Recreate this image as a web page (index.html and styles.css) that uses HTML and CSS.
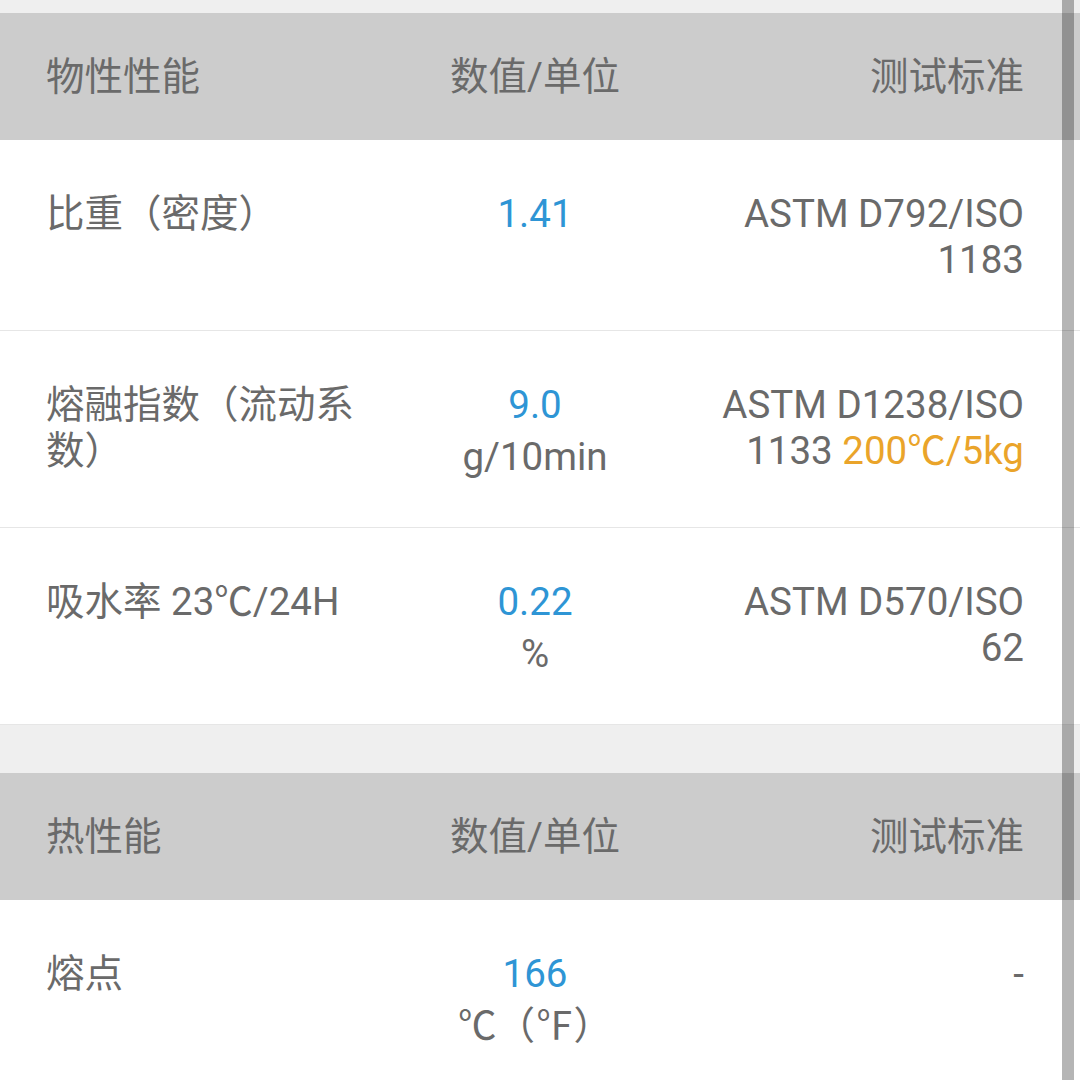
FILE: index.html
```html
<!DOCTYPE html>
<html lang="zh-CN">
<head>
<meta charset="utf-8">
<title>物性</title>
<link rel="stylesheet" href="styles.css">
</head>
<body>
<div class="gap-top"></div>
<section class="table">
  <div class="head">
    <div class="c1">物性性能</div>
    <div class="c2">数值/单位</div>
    <div class="c3">测试标准</div>
  </div>
  <div class="row">
    <div class="c1">比重（密度）</div>
    <div class="c2"><div class="val">1.41</div></div>
    <div class="c3">ASTM D792/ISO 1183</div>
  </div>
  <div class="row">
    <div class="c1">熔融指数（流动系数）</div>
    <div class="c2"><div class="val">9.0</div><div class="unit">g/10min</div></div>
    <div class="c3"><span class="std">ASTM D1238/ISO</span> <span class="std">1133</span> <span class="cond">200℃/5kg</span></div>
  </div>
  <div class="row">
    <div class="c1">吸水率 23℃/24H</div>
    <div class="c2"><div class="val">0.22</div><div class="unit">%</div></div>
    <div class="c3">ASTM D570/ISO 62</div>
  </div>
</section>
<div class="gap"></div>
<section class="table">
  <div class="head">
    <div class="c1">热性能</div>
    <div class="c2">数值/单位</div>
    <div class="c3">测试标准</div>
  </div>
  <div class="row">
    <div class="c1">熔点</div>
    <div class="c2"><div class="val">166</div><div class="unit">℃（℉）</div></div>
    <div class="c3">-</div>
  </div>
</section>
<div class="scrollbar"></div>
</body>
</html>
```
FILE: styles.css
```css
html, body {
  margin: 0;
  padding: 0;
}
body {
  background: #efefef;
  font-family: "Roboto", "Noto Sans CJK SC", sans-serif;
  font-size: 38.5px;
  line-height: 46px;
  color: #6a6a6a;
  overflow: hidden;
}
.gap-top {
  height: 13px;
}
.gap {
  height: 48px;
}
.head, .row {
  display: grid;
  grid-template-columns: 1fr 1fr 1fr;
  padding: 0 56px 0 46px;
}
.head {
  height: 127px;
  align-items: center;
  background: #cccccc;
}
.row {
  background: #ffffff;
  padding-top: 51px;
  padding-bottom: 47px;
  border-bottom: 1px solid #e6e6e6;
  align-items: start;
}
.c1 {
  text-align: left;
}
.c2 {
  text-align: center;
}
.c3 {
  text-align: right;
}
.std,
.cond {
  display: inline-block;
  line-height: 46px;
}
.val {
  color: #2e95d5;
}
.unit {
  margin-top: 6px;
}
.cond {
  color: #eaa42a;
}
.scrollbar {
  position: fixed;
  top: 0;
  bottom: 0;
  right: 6px;
  width: 12px;
  background: rgba(0, 0, 0, 0.29);
}
```
